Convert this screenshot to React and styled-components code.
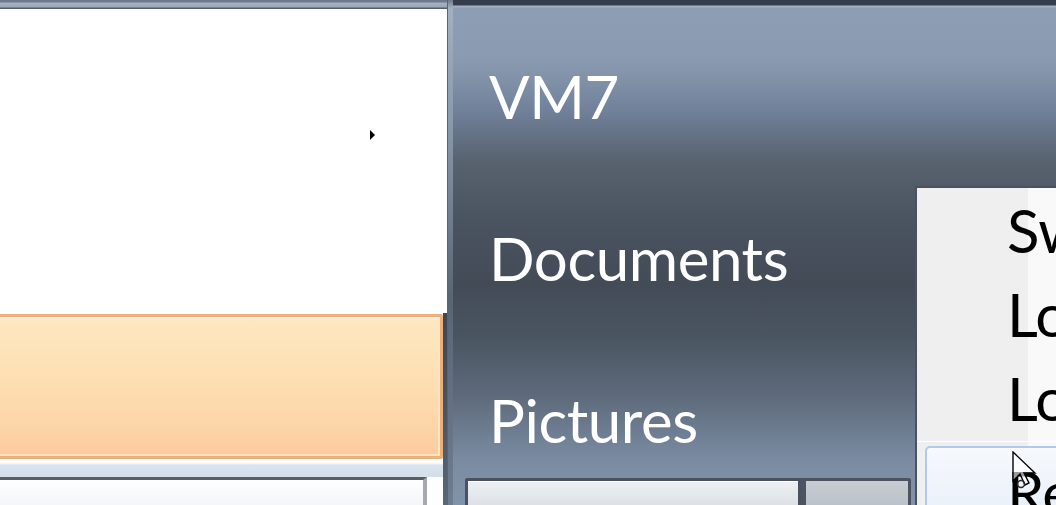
import React from "react";
import styled, { createGlobalStyle } from "styled-components";

const GlobalStyle = createGlobalStyle`
  html, body { margin: 0; padding: 0; overflow: hidden; }
  body { width: 1056px; height: 505px; background: #3a4250; }
`;

const Screen = styled.div`
  position: relative;
  display: flex;
  width: 1056px;
  height: 505px;
  overflow: hidden;
  font-family: Lato, "Open Sans", sans-serif;
`;

/* ---------- left column ---------- */
const LeftColumn = styled.div`
  width: 447px;
  display: flex;
  flex-direction: column;
  flex-shrink: 0;
`;

const TopRim = styled.div`
  height: 9px;
  background: linear-gradient(
    to bottom,
    #6d798a 0,
    #6d798a 2px,
    #a5b1c0 3px,
    #9ba8b8 7px,
    #525d6e 8px,
    #525d6e 9px
  );
`;

const ProgramList = styled.div`
  height: 304px;
  background: #ffffff;
  display: flex;
  flex-direction: column;
`;

const ProgramRow = styled.div`
  height: 40px;
  margin-top: 106px;
  display: flex;
  align-items: center;
  justify-content: flex-end;
  padding-right: 72px;
`;

const SubmenuArrow = styled.span`
  width: 0;
  height: 0;
  border-left: 5px solid #000;
  border-top: 5px solid transparent;
  border-bottom: 5px solid transparent;
`;

const Lower = styled.div`
  flex: 1;
  display: flex;
`;

const LowerMain = styled.div`
  flex: 1;
  display: flex;
  flex-direction: column;
  background: #fff;
`;

const EdgeStrip = styled.div`
  width: 4px;
  background: linear-gradient(to bottom, #3d4654, #4c5767 60%, #5b6879);
`;

const SelectedItem = styled.div`
  height: 145px;
  box-sizing: border-box;
  margin-top: 1px;
  border: 3px solid #eab17d;
  border-left: none;
  border-radius: 0 3px 3px 0;
  box-shadow: inset 0 2px 0 #fff3df, inset -2px 0 0 #fde6c6, inset 0 -2px 0 #fde2c2;
  background: linear-gradient(
    to bottom,
    #fde8c0 0%,
    #fde0b5 40%,
    #fdd6a9 75%,
    #fccb9e 100%
  );
`;

const Band = styled.div`
  height: 18px;
  background: linear-gradient(
    to bottom,
    #fdfdfb 0,
    #fdfdfb 4px,
    #dbe3ef 6px,
    #d3ddeb 100%
  );
`;

const SearchBox = styled.div`
  flex: 1;
  margin-right: 16px;
  border-top: 3px solid #595d64;
  border-right: 4px solid #a6aab0;
  background: linear-gradient(to bottom, #ffffff, #f3f5f8);
`;

/* ---------- divider & right panel ---------- */
const Divider = styled.div`
  width: 5px;
  flex-shrink: 0;
  border-left: 1px solid #5a6474;
  background: linear-gradient(
    to bottom,
    #6e7a8c 0,
    #a4b0bf 8px,
    #8a99ad 120px,
    #5a6574 300px,
    #6f7d90 100%
  );
`;

const RightPanel = styled.div`
  flex: 1;
  display: flex;
  flex-direction: column;
  background: linear-gradient(
    to bottom,
    #8d9eb5 0px,
    #8a9bb1 60px,
    #71819a 110px,
    #58636f 160px,
    #4a5360 220px,
    #434b57 285px,
    #4a5461 335px,
    #5d6a7b 395px,
    #7a8ba2 460px,
    #8193a9 505px
  );
`;

const RightTop = styled.div`
  height: 8px;
  flex-shrink: 0;
  background: linear-gradient(to bottom, #363e4b 0, #363e4b 5px, #a7b3c3 6px, #93a4ba 8px);
`;

const NavList = styled.div`
  flex: 1;
  min-height: 0;
  margin-top: 7px;
  padding-left: 36px;
  display: flex;
  flex-direction: column;
`;

const NavLink = styled.div`
  flex-shrink: 0;
  font-size: 60px;
  line-height: 162px;
  height: 162px;
  color: #ffffff;
  letter-spacing: -0.4px;
`;

const ShutdownRow = styled.div`
  flex-shrink: 0;
  display: flex;
  padding-left: 12px;
  height: 27px;
`;

const ShutdownButton = styled.div`
  width: 336px;
  box-sizing: border-box;
  border: 3px solid #4a5260;
  border-bottom: none;
  border-radius: 3px 0 0 0;
  background: linear-gradient(to bottom, #eef0f3, #dde1e6);
  box-shadow: inset 0 1px 0 #ffffff;
`;

const ArrowButton = styled.div`
  width: 110px;
  box-sizing: border-box;
  border: 3px solid #4c5361;
  border-left-width: 5px;
  border-bottom: none;
  border-radius: 0 3px 0 0;
  background: linear-gradient(to bottom, #c8cdd3, #bcc2ca);
`;

/* ---------- context menu (overlay) ---------- */
const Menu = styled.div`
  position: absolute;
  left: 915px;
  top: 186px;
  width: 170px;
  height: 340px;
  border-left: 2px solid #4b525e;
  border-top: 2px solid #4b525e;
  background: linear-gradient(to right, #efefef 0, #efefef 111px, #f9f9f9 111px);
  display: flex;
  flex-direction: column;
`;

const MenuTopBand = styled.div`
  height: 4px;
  background: #c1c1c1;
`;

const MenuItem = styled.div`
  font-size: 60px;
  line-height: 84px;
  color: #000;
  padding-left: 90px;
  white-space: nowrap;
  letter-spacing: -0.4px;
`;

const MenuSeparator = styled.div`
  height: 1px;
  margin-top: 1px;
  background: #cacaca;
  border-bottom: 1px solid #ffffff;
`;

const HoverItem = styled.div`
  margin: 4px 0 0 8px;
  border: 2px solid #aecbef;
  border-radius: 5px;
  background: linear-gradient(to bottom, #f6f9fd, #e6eef9);
  font-size: 60px;
  line-height: 84px;
  padding: 2px 0 0 80px;
  white-space: nowrap;
  color: #000;
  letter-spacing: -0.4px;
`;

const Cursor = styled.svg`
  position: absolute;
  left: 1012px;
  top: 451px;
`;

export default function App() {
  return (
    <>
      <GlobalStyle />
      <Screen>
        <LeftColumn>
          <TopRim />
          <ProgramList>
            <ProgramRow>
              <SubmenuArrow />
            </ProgramRow>
          </ProgramList>
          <Lower>
            <LowerMain>
              <SelectedItem />
              <Band />
              <SearchBox />
            </LowerMain>
            <EdgeStrip />
          </Lower>
        </LeftColumn>
        <Divider />
        <RightPanel>
          <RightTop />
          <NavList>
            <NavLink>VM7</NavLink>
            <NavLink>Documents</NavLink>
            <NavLink>Pictures</NavLink>
          </NavList>
          <ShutdownRow>
            <ShutdownButton />
            <ArrowButton />
          </ShutdownRow>
        </RightPanel>

        <Menu>
          <MenuTopBand />
          <MenuItem>Switch user</MenuItem>
          <MenuItem>Log off</MenuItem>
          <MenuItem>Lock</MenuItem>
          <MenuSeparator />
          <HoverItem>Restart</HoverItem>
        </Menu>

        <Cursor width="30" height="40" viewBox="0 0 30 40">
          <path
            d="M1 1 L1 30 L8 23 L13 34 L17 32 L12 22 L23 22 Z"
            fill="#ffffff"
            fillOpacity="0.6"
            stroke="#000"
            strokeWidth="1.4"
            strokeLinejoin="miter"
          />
          <circle cx="9" cy="33" r="3.5" fill="none" stroke="#2a2a2a" strokeWidth="1.5" />
        </Cursor>
      </Screen>
    </>
  );
}
